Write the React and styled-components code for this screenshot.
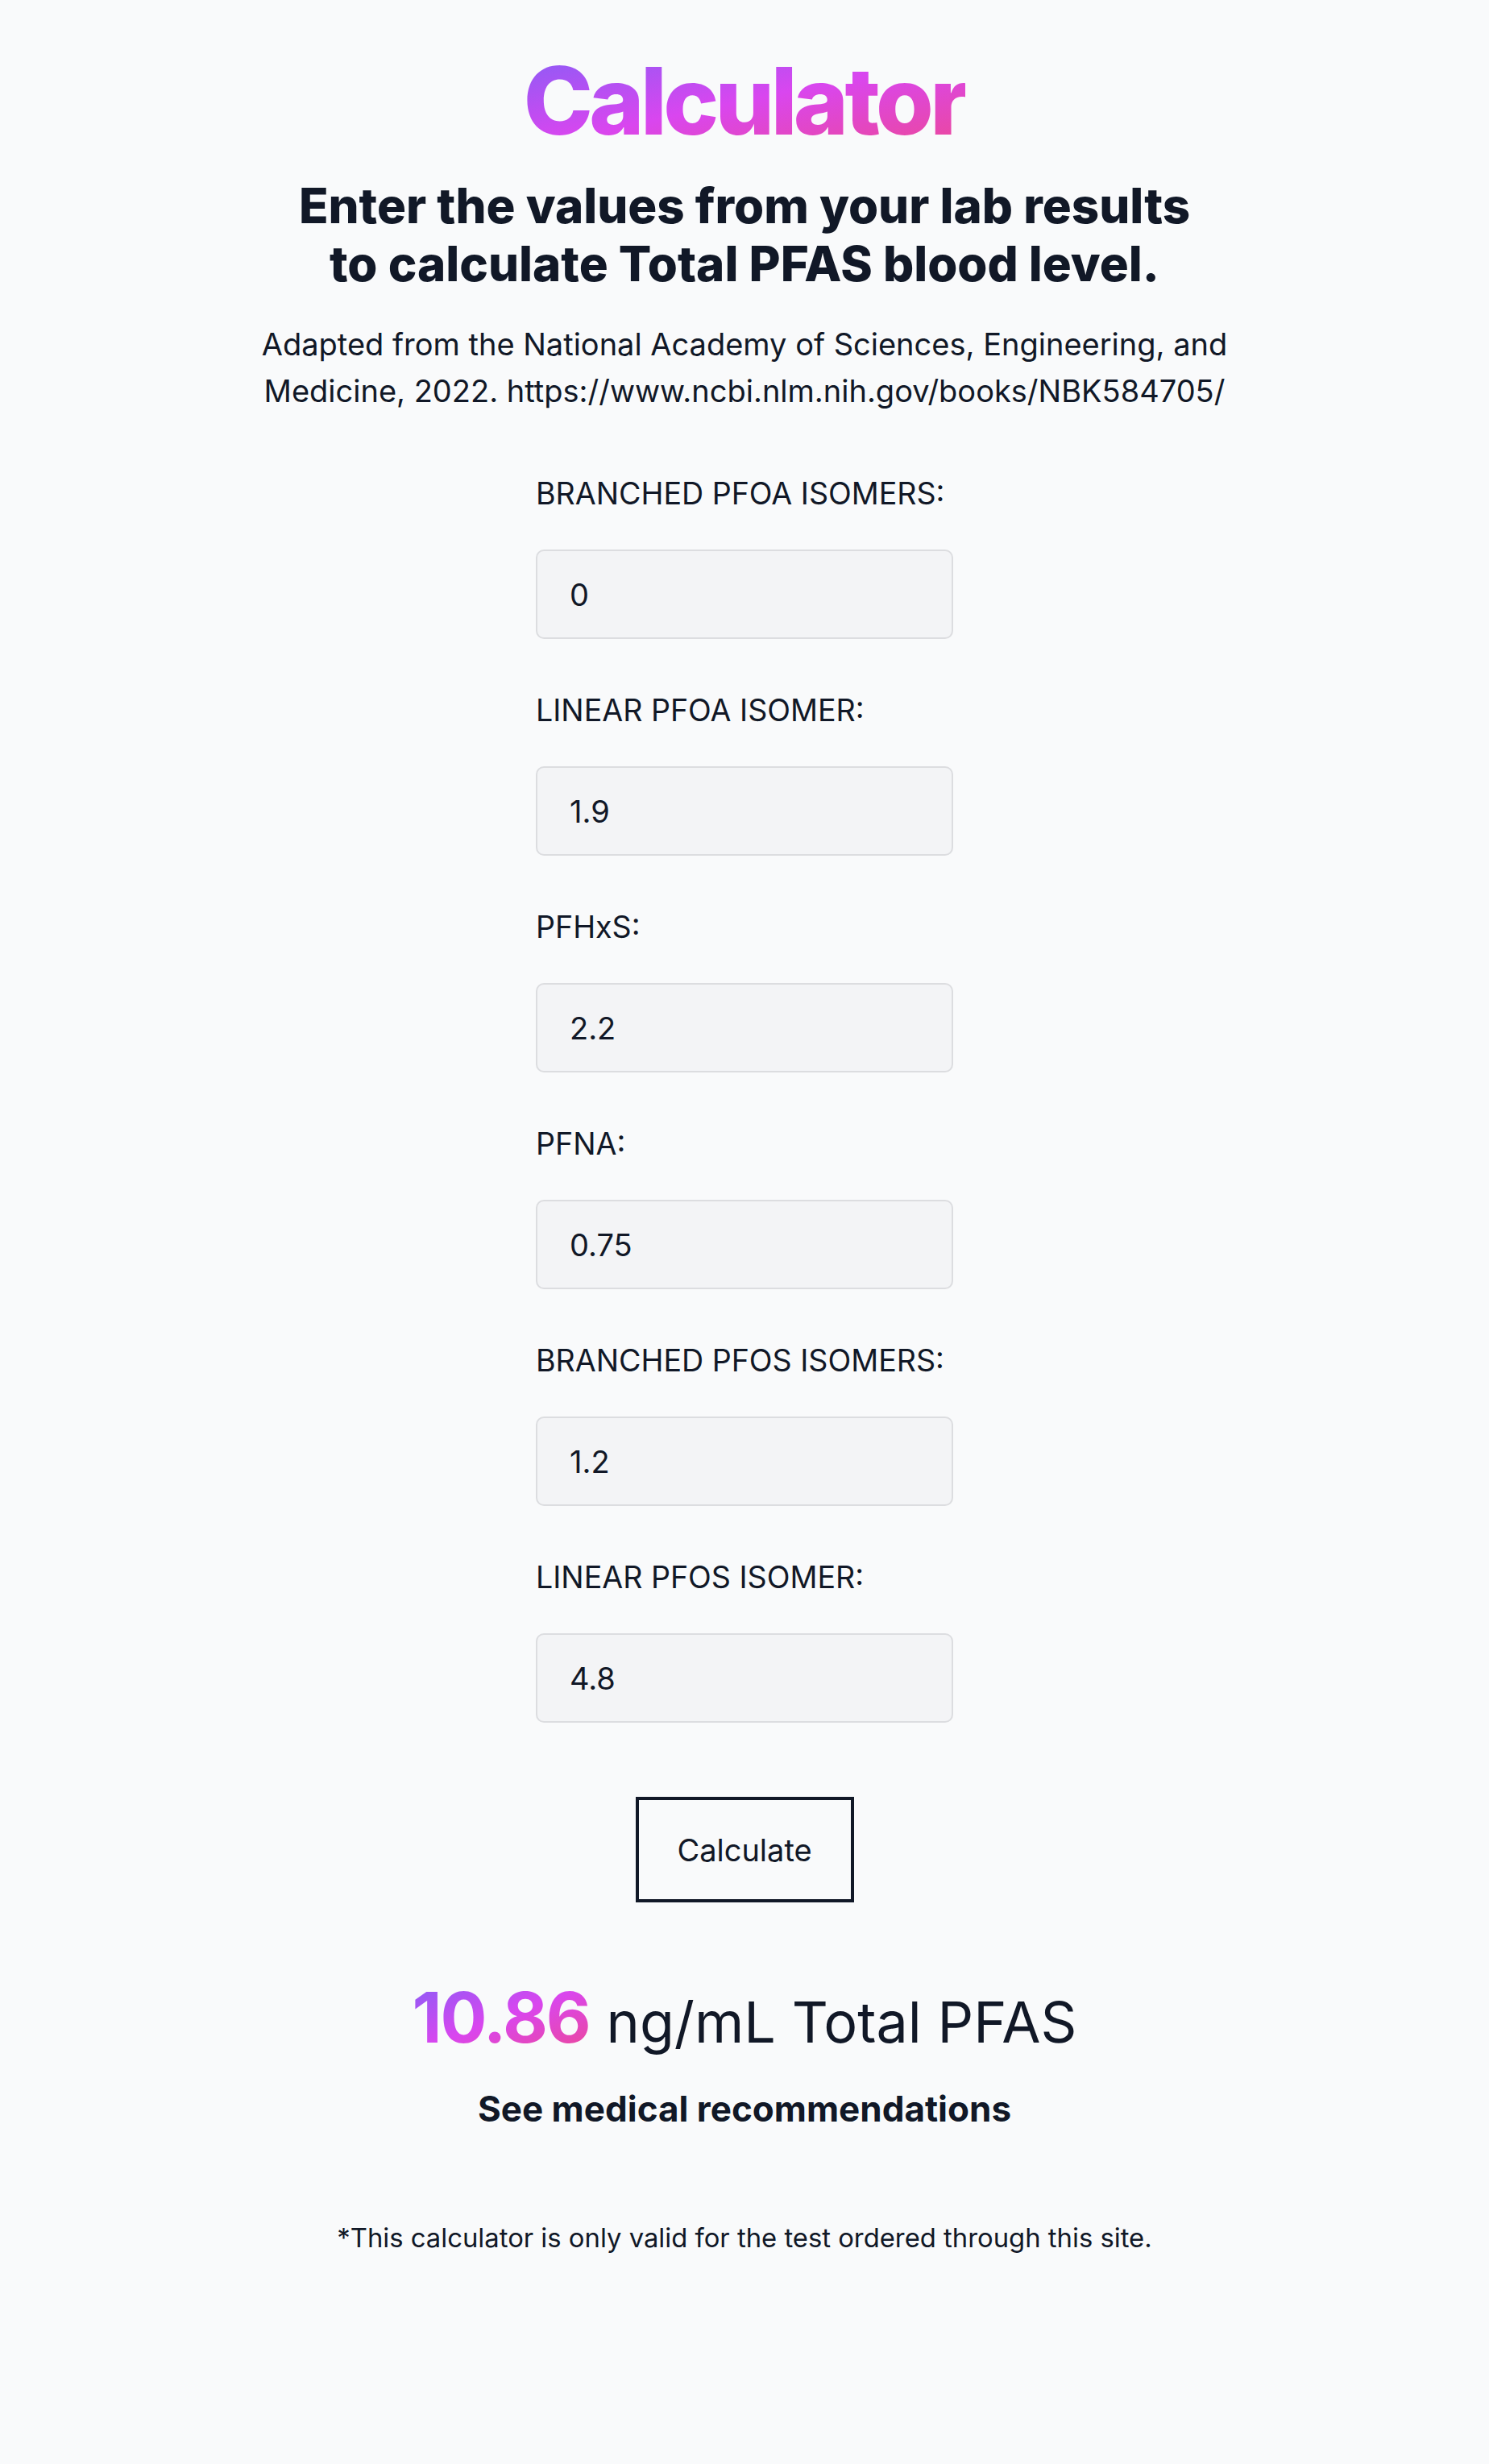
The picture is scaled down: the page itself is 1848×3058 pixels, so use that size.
import React from "react";
import styled, { createGlobalStyle } from "styled-components";

const Global = createGlobalStyle`
  html, body { margin: 0; padding: 0; background: #f9fafb; }
  body { font-family: Inter, "Noto Sans", sans-serif; color: #111827; }
  * { box-sizing: border-box; }
`;

const Page = styled.main`
  min-height: 3058px;
  display: flex;
  flex-direction: column;
  align-items: center;
  padding-top: 67px;
`;

const gradient = `
  background-image: linear-gradient(to bottom right, #8b5cf6, #d946ef, #ec4899);
  -webkit-background-clip: text;
  background-clip: text;
  color: transparent;
`;

const Title = styled.h1`
  margin: 0;
  font-size: 116px;
  line-height: 1;
  font-weight: 800;
  letter-spacing: -0.04em;
  ${gradient}
`;

const Subtitle = styled.h2`
  margin: 36px 0 0;
  font-size: 60px;
  line-height: 72px;
  font-weight: 800;
  text-align: center;
`;

const Source = styled.p`
  margin: 35px 0 0;
  font-size: 38px;
  line-height: 58px;
  text-align: center;
  max-width: 1240px;
`;

const Form = styled.form`
  margin-top: 71px;
  display: flex;
  flex-direction: column;
  width: 518px;
`;

const Field = styled.div`
  display: flex;
  flex-direction: column;
  margin-bottom: 61px;
`;

const Label = styled.label`
  font-size: 37.6px;
  line-height: 56px;
  margin-bottom: 41px;
`;

const Input = styled.input`
  height: 111px;
  width: 518px;
  border: 2px solid #dcdde0;
  border-radius: 10px;
  background: #f3f4f6;
  padding: 0 40px;
  font-family: Inter, "Noto Sans", sans-serif;
  font-size: 38px;
  color: #111827;
  outline: none;
`;

const Button = styled.button`
  align-self: center;
  margin-top: 31px;
  width: 271px;
  height: 131px;
  border: 4px solid #111827;
  background: transparent;
  font-family: Inter, "Noto Sans", sans-serif;
  font-size: 38px;
  color: #111827;
  cursor: pointer;
`;

const Result = styled.div`
  margin-top: 100px;
  display: flex;
  align-items: baseline;
  justify-content: center;
  gap: 21px;
`;

const Value = styled.span`
  font-size: 86px;
  line-height: 1;
  font-weight: 700;
  letter-spacing: -0.025em;
  ${gradient}
`;

const Unit = styled.span`
  font-size: 70px;
  line-height: 1;
`;

const Recs = styled.a`
  display: block;
  margin-top: 48px;
  font-size: 44px;
  line-height: 1;
  font-weight: 700;
  color: #111827;
  text-decoration: none;
`;

const Note = styled.p`
  margin: 118px 0 0;
  font-size: 32.8px;
  line-height: 40px;
`;

const fields = [
  ["BRANCHED PFOA ISOMERS:", "0"],
  ["LINEAR PFOA ISOMER:", "1.9"],
  ["PFHxS:", "2.2"],
  ["PFNA:", "0.75"],
  ["BRANCHED PFOS ISOMERS:", "1.2"],
  ["LINEAR PFOS ISOMER:", "4.8"],
];

export default function App() {
  return (
    <>
      <Global />
      <Page>
        <Title>Calculator</Title>
        <Subtitle>
          Enter the values from your lab results
          <br />
          to calculate Total PFAS blood level.
        </Subtitle>
        <Source>
          Adapted from the National Academy of Sciences, Engineering, and
          Medicine, 2022. https://www.ncbi.nlm.nih.gov/books/NBK584705/
        </Source>
        <Form onSubmit={(e) => e.preventDefault()}>
          {fields.map(([label, value], i) => (
            <Field key={label}>
              <Label htmlFor={`f${i}`}>{label}</Label>
              <Input id={`f${i}`} type="text" defaultValue={value} />
            </Field>
          ))}
          <Button type="submit">Calculate</Button>
        </Form>
        <Result>
          <Value>10.86</Value>
          <Unit>ng/mL Total PFAS</Unit>
        </Result>
        <Recs href="#">See medical recommendations</Recs>
        <Note>*This calculator is only valid for the test ordered through this site.</Note>
      </Page>
    </>
  );
}
